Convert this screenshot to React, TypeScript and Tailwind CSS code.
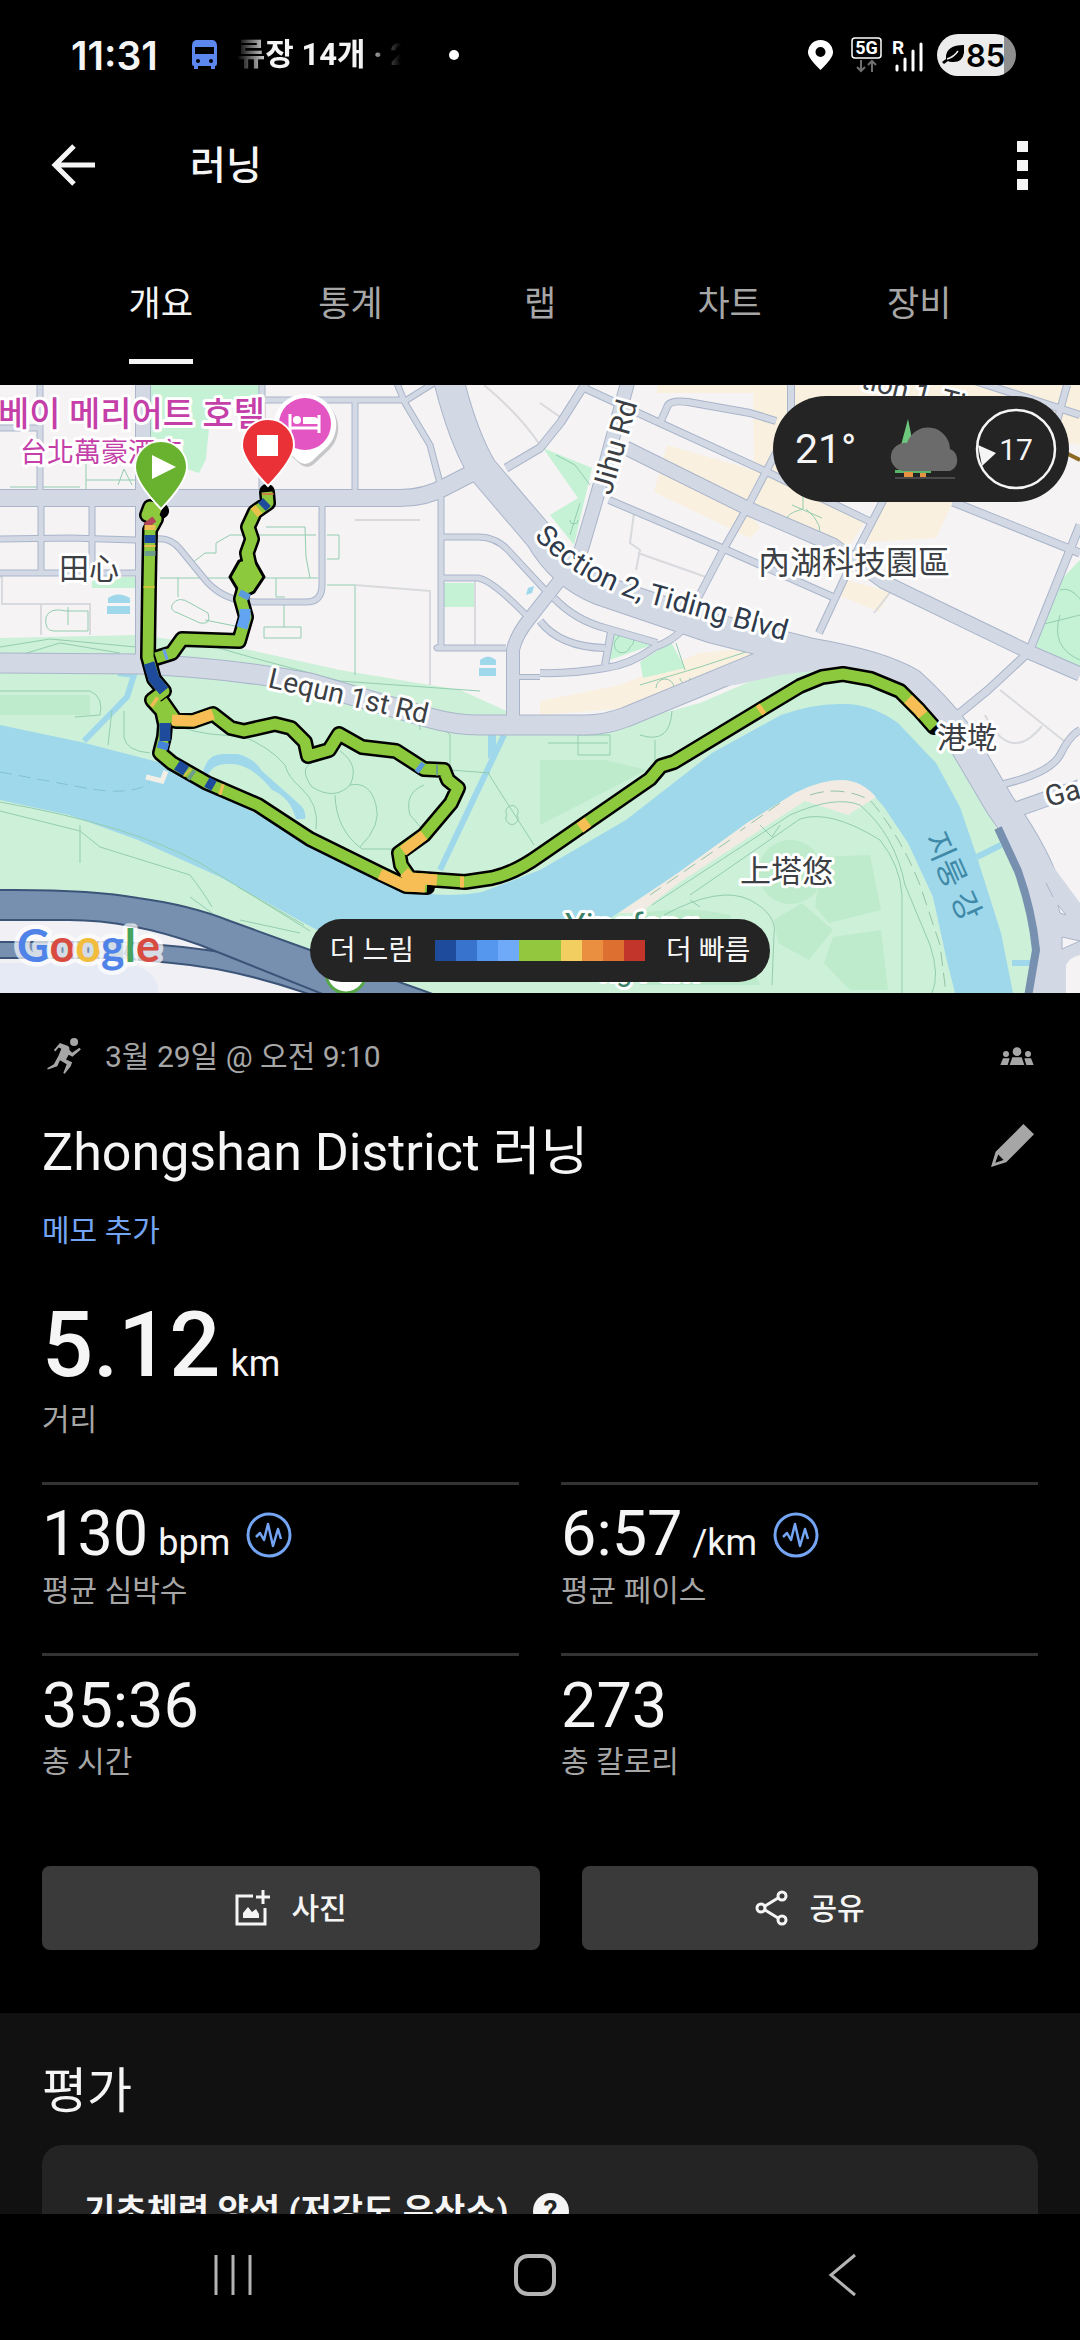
import type { ReactNode } from 'react';

const TABS = ['개요', '통계', '랩', '차트', '장비'];

const PACE_COLORS = [
  'bg-[#1e4b9b]',
  'bg-[#3873cd]',
  'bg-[#5596ee]',
  'bg-[#6eaaf8]',
  'bg-[#93c83e]',
  'bg-[#93c83e]',
  'bg-[#f2ce60]',
  'bg-[#e98f3f]',
  'bg-[#dd7030]',
  'bg-[#c1352b]',
];

// [path, width]
const ROADS: [string, number][] = [
  ['M40 0V108', 5],
  ['M41 118V188', 5],
  ['M92 118V188', 5],
  ['M0 43H40', 5],
  ['M0 154L70 153L136 155', 5],
  ['M0 188H136', 5],
  ['M156 154Q170 152 180 164L207 197Q226 217 255 217H306Q322 217 322 200V118', 5],
  ['M262 0V108', 5],
  ['M262 15H403', 5],
  ['M355 15V108', 5],
  ['M396 -4L405 18L430 60L441 102', 5],
  ['M405 16L434 -2', 5],
  ['M441 112V262L437 263H506', 5],
  ['M442 152H478Q496 152 508 165L545 205', 5],
  ['M442 193H478Q492 195 527 231', 5],
  ['M513 292H540', 4],
  ['M506 83L540 63L561 37L587 -4', 7],
  ['M582 2L660 38L767 87L871 137', 6],
  ['M660 38L668 20Q672 15 688 17L750 28L776 36', 6],
  ['M791 0V40', 6],
  ['M609 115L722 163L833 212', 6],
  ['M780 60L747 123L722 167L698 213Q690 250 655 262Q630 280 605 283Q570 289 540 288', 6],
  ['M886 110L860 160L819 248', 6],
  ['M953 117L1080 168', 7],
  ['M1080 140L1029 267L988 305L955 332', 7],
  ['M554 213Q575 235 605 243L657 258', 6],
  ['M540 236Q560 262 605 263', 6],
  ['M611 247L605 280', 6],
  ['M975 -4L1080 30', 6],
  ['M1067 0L1056 40', 6],
  ['M1004 399Q1050 388 1060 370Q1070 350 1080 345', 6],
  ['M1012 426L1080 402', 14],
  ['M626 63L747 123L833 160L884 197L1029 267L1080 289', 13],
  ['M628 -4L602 93Q592 130 572 195', 13],
  ['M513 340V265Q516 250 530 233L567 186', 12],
  ['M143 0V270', 14],
  ['M0 113H400Q425 113 445 102L480 84', 16],
  ['M0 278L140 279Q230 283 310 298L430 333Q455 340 480 340H585Q605 340 626 332L781 268', 19],
  ['M448 -8Q462 50 482 84L540 152Q562 190 600 205L712 243L810 268Q880 280 910 298Q935 320 960 352L1000 420Q1036 470 1048 510Q1060 550 1062 612', 29],
];

const TRAILS = [
  'M86 75V105M86 95H140M10 102H80M118 100L124 84L132 100M190 105H345',
  'M266 142H305L306 172L310 193M192 178L205 168H216V158L230 150L316 150M160 193H318M276 193V212H285M327 150H339V174H327M327 200H355V290',
  'M46 232Q50 222 66 226H88V246H54Q44 246 46 232M68 222V240M178 192V212M172 220Q178 210 190 218L208 228Q212 240 200 238L178 228Q170 226 172 220M205 235L240 242M284 220V242M264 242H301V253H264Z',
  'M0 262L50 254L136 262M20 270L60 258L120 268M215 262L250 272L340 296L480 306M0 306H90Q104 312 100 330L75 332M124 326V352Q126 366 150 368M112 325L108 360',
  'M180 342Q210 352 240 350Q270 362 285 380Q288 392 300 402Q320 420 316 444M340 366Q360 380 350 400Q335 416 312 402Q296 380 318 376M350 400Q370 396 376 420Q382 440 360 462M335 410Q336 445 362 464H400M424 400Q404 408 410 430L424 446',
  'M488 388L534 460M507 430A6 6 0 1 0 517 430A6 6 0 1 0 507 430M436 335L450 350V385L490 388M420 336V345',
  'M0 417Q130 440 200 478L310 546M0 426L80 446L100 462L190 490Q204 508 212 522M80 440V478M238 502L304 540M240 535L300 548M190 512L212 528',
  'M640 350Q670 360 672 326M655 378V355M548 358H608M578 350H610V370H578Z',
  'M652 520L790 430Q835 410 860 420Q895 450 905 500L930 560Q940 590 932 608M690 510L800 434Q830 424 880 455Q900 480 902 510V608M664 530Q720 500 750 515Q778 530 774 550L772 600M760 440L772 452L780 440M690 515L700 522',
  'M792 120L822 133M803 110V124Q780 130 790 140M806 124Q826 140 818 158M580 118L570 150M556 70L575 80L590 100M570 135A4 4 0 1 0 578 135',
  'M1060 205Q1075 200 1090 230M1040 240L1080 230M1060 230Q1050 262 1080 275',
  'M618 253A8 8 0 1 0 630 262A8 8 0 1 0 618 253M676 258L685 285M656 303A7 7 0 1 1 674 303M640 300L700 282L755 264M680 293A5 5 0 1 0 690 293',
];

const ROUTE_OUT =
  'M161 126L150 122L147 130L156 134L150 145L149 200L148 272L154 294L164 306L152 315L162 326L165 340L164 352L160 368L172 378L207 398L258 420L310 454L379 488L406 501L427 502';
const ROUTE_BACK =
  'M267 107L268 118L255 127L248 142L252 154L247 168L250 182L241 214L246 232L239 256L182 254L172 268L156 273M162 316L176 336L193 336L213 329L231 343L244 346L275 339L291 343L305 357L308 371L329 365L339 349L362 362L396 366L424 384L444 385L448 395L458 403L451 418L424 450L399 468L401 480L410 493L465 497L492 493Q515 488 540 470L650 394L661 381L674 377L760 325L800 301L822 292L843 289L871 294L900 306L919 325L934 342';

const SEGMENTS: [string, string][] = [
  ['M148 135L152 140', '#b3455a'],
  ['M150 140V145', '#eebb55'],
  ['M150 150V158', '#1e4b9b'],
  ['M150 160V162', '#eebb55'],
  ['M150 166V171', '#6d9d8e'],
  ['M149 201V203', '#d3c33c'],
  ['M164 270L167 269', '#6aa0e8'],
  ['M149 278L154 294L164 306', '#1e4b9b'],
  ['M165 338V356', '#1e4b9b'],
  ['M164 357L162 364', '#4684dc'],
  ['M153 316L156 318', '#eebb55'],
  ['M177 380L186 386', '#1e4b9b'],
  ['M187 387L188 388', '#eebb55'],
  ['M190 389L193 391', '#6d9d8e'],
  ['M207 397L214 401', '#1e4b9b'],
  ['M220 404L223 405', '#eebb55'],
  ['M172 335L193 336L213 329', '#f6be55'],
  ['M380 489L406 501L425 502', '#f6be55'],
  ['M268 108V110', '#cf7f43'],
  ['M267 117L262 122', '#1e4b9b'],
  ['M259 124L254 128', '#e8c14b'],
  ['M246 207L243 213', '#5b9bdc'],
  ['M245 224V232L242 243', '#62a3f2'],
  ['M418 381L422 384', '#5b9bdc'],
  ['M436 385L438 385', '#6d9d8e'],
  ['M424 450L403 466', '#f6be55'],
  ['M404 487L410 493L437 495', '#f6be55'],
  ['M460 497H464', '#f6be55'],
  ['M580 443L588 437', '#f6be55'],
  ['M759 326L763 323', '#f6be55'],
  ['M908 314L919 325L923 330', '#f6be55'],
];

interface MapLabelProps {
  x: number;
  y: number;
  size: number;
  color?: string;
  rotate?: number;
  weight?: number;
  children: ReactNode;
}

function MapLabel({ x, y, size, color = '#3c3f44', rotate = 0, weight = 400, children }: MapLabelProps) {
  return (
    <text
      x={x}
      y={y}
      fontSize={size}
      fontWeight={weight}
      fill={color}
      stroke="#ffffff"
      strokeWidth={6}
      strokeLinejoin="round"
      paintOrder="stroke"
      transform={`rotate(${rotate} ${x} ${y})`}
    >
      {children}
    </text>
  );
}

function RouteMap() {
  return (
    <svg viewBox="0 0 1080 608" className="block w-full" role="img" aria-label="Zhongshan District">
      <rect width="1080" height="608" fill="#f5f3f4" />

      {/* built-up blocks */}
      <g fill="#f9f0df">
        <path d="M753 0H1080V60L960 40L776 112L754 84ZM657 0H753V8H657Z" />
        <path d="M667 60L760 87L747 123L760 143L750 153L654 107Z" />
        <path d="M767 86L867 133L850 160H829L753 125Z" />
        <path d="M884 117H953L936 153L867 157Z" />
        <path d="M846 195L891 207L879 227L838 210Z" />
        <path d="M620 300L700 268L765 262L765 275L640 322L540 330V316Z" />
      </g>

      {/* parks */}
      <g fill="#c5f2d5">
        <path d="M151 0H259V18L211 22L206 74L199 88L190 85L151 62Z" />
        <path d="M92 192H136V203H92ZM442 198H474V222H442Z" />
        <path d="M543 63L592 83L574 160L550 130L578 113Z" />
        <path d="M1080 175L1056 200L1036 263L1080 285Z" />
        <path d="M611 247L652 260L607 276ZM640 277L671 257L685 283L643 293Z" />
      </g>
      <path
        d="M0 253L138 250L250 265L340 285L460 305L520 332L600 345L700 318L770 288L820 282L880 295L930 335L975 400L1035 520L1040 608H0Z"
        fill="#cdf0d8"
      />
      <path d="M540 375H605L647 385L540 440ZM0 310H90V330H0ZM790 455A32 32 0 1 0 791 455ZM822 472L870 470L881 525L829 538L815 522ZM774 535L802 518L833 545L809 575L778 558ZM833 552L881 545L888 605H850L824 578ZM640 528Q690 520 730 530L760 600H640Z" fill="#beebcc" />

      {/* water */}
      <g fill="#a0d8eb">
        <path d="M0 340L81 357L158 377L207 402L310 458L396 502Q440 515 482 507L540 485L626 435L712 368L781 330Q815 318 843 319Q870 318 898 338L936 378L960 422L977 472L1001 548L1013 608H955L946 572L933 512L908 458L884 422Q865 398 843 395Q820 395 795 408L747 438L678 488L600 540H560L500 585H400L317 545L275 522L220 492L138 455L69 430L0 415Z" />
        <path d="M108 213Q118 206 130 213V218H108ZM107 221H130V229H107ZM480 275Q488 268 496 275V280H480ZM479 283H496V291H479ZM488 350H496V366L488 374ZM528 203L534 201L532 208L526 210Z" />
        <path d="M203 388Q206 370 222 369H238Q255 374 262 386L298 418Q307 425 305 434H296Q290 412 272 405Q250 378 230 379Q212 378 207 392Z" />
      </g>
      <path d="M118 288L134 290L127 312L84 356M504 350L440 485M977 472L1001 460M1012 578H1080" stroke="#a0d8eb" strokeWidth="6" fill="none" />
      <path d="M843 395Q862 396 876 412L848 430L805 416L680 497L640 528L619 528L678 488L747 438L795 408Q820 395 843 395Z" fill="#f1ebe3" />
      <path d="M0 387L80 402Q130 412 150 398" stroke="#82bfd6" strokeWidth="1" strokeDasharray="12 7" fill="none" />
      <path d="M146 392L162 396L166 386" stroke="#f1efe6" strokeWidth="5" fill="none" />
      <path d="M810 410Q840 400 870 415Q900 450 920 500L940 560L946 608M780 418L740 446M730 455L650 510" stroke="#93c3a8" strokeWidth="1" strokeDasharray="14 7" fill="none" />

      <g fill="none" stroke="#93cdb0" strokeWidth="1">
        {TRAILS.map(d => (
          <path key={d} d={d} />
        ))}
      </g>
      <g fill="none" stroke="#d9dadd" strokeWidth="2">
        <path d="M0 192H2V219H90V250M41 219V250M355 135H420M355 200L430 206V300M475 190V262M484 0Q520 30 540 60M634 128L630 158L640 165L636 185M638 168L706 192M874 228L892 205M1000 305L1064 356M985 330Q1010 380 1042 341M540 18L566 36" />
      </g>

      {/* expressway */}
      <path d="M0 533H80L180 550L320 608H0Z" fill="#f1f1f5" />
      <path d="M0 578H120Q160 582 158 608H0Z" fill="#e6eaf4" />
      <g fill="#7890b0" stroke="#3b5478" strokeWidth="2">
        <path d="M-4 557H120Q180 560 240 570L300 590L360 612H317Q240 584 172 578L120 573H-4Z" />
        <path d="M-4 505Q90 504 138 513Q190 520 230 536L310 565L441 612H330Q250 580 200 560Q130 535 69 535H-4Z" />
      </g>

      <g fill="none" strokeLinejoin="round">
        {ROADS.map(([d, w]) => (
          <path key={d} d={d} stroke="#aab5ca" strokeWidth={w + 2} />
        ))}
        {ROADS.map(([d, w]) => (
          <path key={d} d={d} stroke="#d2d9e5" strokeWidth={w} />
        ))}
      </g>
      <path d="M765 264L800 268L860 280L780 290L735 300L690 304L764 274Z" fill="#d2d9e5" />
      <path d="M1000 440L1022 435L1052 480L1080 518V608H1032L1036 560L1020 490Z" fill="#d2d9e5" />
      <path d="M998 443L1018 486Q1032 525 1036 565L1028 612" stroke="#7890b0" strokeWidth="8" fill="none" />
      <path d="M1046 498L1053 512M1058 520L1066 530L1060 528ZM1062 552L1080 556L1062 564Z" stroke="#aab5ca" fill="#f5f3f4" />
      <path d="M1066 580Q1070 572 1080 570V608H1066Z" fill="#f5f3f4" />
      <path d="M1066 68L1080 75" stroke="#8c6a24" strokeWidth="4" />

      {/* hotel marker */}
      <path d="M305 9A31 31 0 0 1 328 61L312 76Q305 82 298 76L282 61A31 31 0 0 1 305 9Z" fill="#9a9ca0" opacity="0.5" transform="translate(2 3)" />
      <path d="M305 9A31 31 0 0 1 328 61L312 76Q305 82 298 76L282 61A31 31 0 0 1 305 9Z" fill="#ffffff" />
      <circle cx="305" cy="39" r="26" fill="#e455c4" />
      <path d="M290 29V48M290 43H319M319 30V48" stroke="#ffffff" strokeWidth="3" />
      <path d="M303 32H314Q319 32 319 39H303Z" fill="#ffffff" />
      <circle cx="297" cy="35" r="4" fill="#ffffff" />

      <g fontFamily='Roboto, "Noto Sans CJK KR", sans-serif'>
        <MapLabel x={-2} y={41} size={34} color="#c43fa8" weight={500}>베이 메리어트 호텔</MapLabel>
        <MapLabel x={1048} y={422} size={29} rotate={-15}>Gan</MapLabel>
        <MapLabel x={267} y={302} size={28} rotate={13}>Lequn 1st Rd</MapLabel>
        <MapLabel x={611} y={111} size={29} rotate={-74}>Jihu Rd</MapLabel>
        <MapLabel x={860} y={3} size={28} rotate={14}>tion 1, Ti</MapLabel>
        <path id="tiding" d="M534 152Q574 196 640 216Q700 232 800 260" fill="none" />
        <text fontSize="29" fill="#2f3b4c" stroke="#ffffff" strokeWidth="6" strokeLinejoin="round" paintOrder="stroke">
          <textPath href="#tiding">Section 2, Tiding Blvd</textPath>
        </text>
        <text x="924" y="453" fontSize="31" fill="#3f8aa8" transform="rotate(66 924 453)">지룽 강</text>
        <MapLabel x={565} y={552} size={34} color="#3b8168">Yingfeng</MapLabel>
        <MapLabel x={600} y={596} size={29} color="#3b8168">ng Park</MapLabel>
      </g>
      <g fontFamily='"Noto Sans CJK TC", sans-serif'>
        <MapLabel x={20} y={77} size={27} color="#c43fa8">台北萬豪酒店</MapLabel>
        <MapLabel x={59} y={194} size={30}>田心</MapLabel>
        <MapLabel x={758} y={189} size={32}>內湖科技園區</MapLabel>
        <MapLabel x={740} y={497} size={31}>上塔悠</MapLabel>
      </g>

      {/* park marker behind the legend */}
      <circle cx="346" cy="588" r="20" fill="#ffffff" stroke="#57a64a" strokeWidth="3" />

      {/* track */}
      <g fill="none" strokeLinejoin="round">
        <path d={ROUTE_OUT} stroke="#000000" strokeWidth="16" strokeLinecap="round" />
        <path d={ROUTE_BACK} stroke="#000000" strokeWidth="16" strokeLinecap="round" />
        <path d="M239 176Q248 172 255 176L264 192L254 207Q247 212 239 207L230 192Z" fill="#8dc93d" stroke="#000000" strokeWidth="3" />
        <path d={ROUTE_OUT} stroke="#8dc93d" strokeWidth="11" />
        <path d={ROUTE_BACK} stroke="#8dc93d" strokeWidth="11" />
        {SEGMENTS.map(([d, color]) => (
          <path key={d} d={d} stroke={color} strokeWidth="11" />
        ))}
      </g>
      <g fontFamily='"Noto Sans CJK TC", sans-serif'>
        <MapLabel x={937} y={363} size={30}>港墘</MapLabel>
      </g>

      {/* finish and start pins */}
      <path d="M268 101Q242 74 242 60A26 26 0 0 1 294 60Q294 74 268 101Z" fill="#e93137" stroke="#ffffff" strokeWidth="2" />
      <rect x="257" y="50" width="21" height="21" fill="#ffffff" />
      <path d="M161 124Q135 97 135 82A26 26 0 0 1 187 82Q187 97 161 124Z" fill="#68b22f" stroke="#ffffff" strokeWidth="2" />
      <path d="M152 70V94L176 82Z" fill="#ffffff" />

      <text x="17" y="577" fontSize="45" fontFamily="Lato, sans-serif" fontWeight="700" stroke="#ffffff" strokeOpacity="0.7" strokeWidth="9" strokeLinejoin="round" paintOrder="stroke">
        <tspan fill="#4f83e8">G</tspan>
        <tspan fill="#d84b40">o</tspan>
        <tspan fill="#f2bd3c">o</tspan>
        <tspan fill="#4f83e8">g</tspan>
        <tspan fill="#45a35b">l</tspan>
        <tspan fill="#d84b40">e</tspan>
      </text>
    </svg>
  );
}

function StatusBar() {
  return (
    <div className="flex h-[110px] shrink-0 items-center justify-between pr-16 pl-[71px]">
      <div className="flex items-center">
        <span className="font-[Inter] text-[39px] leading-none font-semibold">11:31</span>
        <svg viewBox="0 0 25 30" className="ml-[34px] h-[30px] w-[25px]" fill="#5b87ee">
          <path
            fillRule="evenodd"
            d="M4 0H21Q25 1 25 6V24Q25 26 23 26V29H19V26H6V29H2V26Q0 26 0 24V6Q0 1 4 0ZM3 7V14H22V7ZM6 19A2 2 0 1 0 6 23A2 2 0 1 0 6 19ZM19 19A2 2 0 1 0 19 23A2 2 0 1 0 19 19Z"
          />
        </svg>
        <span className="ml-5 w-[164px] overflow-hidden [mask-image:linear-gradient(to_right,transparent,black_20%,black_75%,transparent)] text-[31px] leading-10 font-bold whitespace-nowrap">
          류장 14개 · 2
        </span>
        <span className="ml-12 size-[10px] rounded-full bg-white" />
      </div>
      <div className="flex items-center">
        <svg viewBox="0 0 25 30" className="h-[30px] w-[25px]" fill="#ffffff">
          <path fillRule="evenodd" d="M12.500 0A12.500 12 0 0 1 25 12.500Q25 18 12.500 30Q0 18 0 12.500A12.500 12 0 0 1 12.500 0ZM12.500 7A5 5 0 1 0 12.500 17A5 5 0 1 0 12.500 7Z" />
        </svg>
        <svg viewBox="0 0 72 36" className="ml-[18px] h-9 w-[72px]" fill="none">
          <rect x="1" y="1" width="29" height="20" rx="3" stroke="#ffffff" strokeWidth="1.500" />
          <text x="15.500" y="17" fontSize="18" fontFamily="Roboto, sans-serif" fontWeight="700" fill="#ffffff" textAnchor="middle">
            5G
          </text>
          <path d="M10 23V34M6 30L10 34L14 30M21 35V24M17 28L21 24L25 28" stroke="#6f6f6f" strokeWidth="2" />
          <text x="41" y="17" fontSize="19" fontFamily="Roboto, sans-serif" fontWeight="700" fill="#ffffff">
            R
          </text>
          <path d="M46 29V33M54 22V33M62 14V33M70 7V33" stroke="#ffffff" strokeWidth="3" strokeLinecap="round" />
        </svg>
        <div className="ml-[14px] flex h-[42px] w-[79px] items-center rounded-full bg-linear-to-r from-[#ececec] from-85% to-[#8f8f8f] to-85% pl-[5px] text-black">
          <svg viewBox="0 0 22 20" className="h-5 w-[22px]">
            <path d="M22 0Q24 18 10 17Q7 17 6 16L2 19L0 17L4 14Q3 0 22 0Z" />
            <path d="M5 14Q12 12 16 6" stroke="#ececec" strokeWidth="1.500" fill="none" />
          </svg>
          <span className="ml-0.5 font-[Inter] text-[31px] leading-none font-semibold">85</span>
        </div>
      </div>
    </div>
  );
}

function PulseIcon() {
  return (
    <svg viewBox="0 0 46 46" className="ml-4 size-[46px]" fill="none" stroke="#74a5f4" strokeWidth="3">
      <circle cx="23" cy="23" r="21" />
      <path d="M10 25L14 21L18 28L22 12L27 34L32 17L35 27" strokeWidth="2.500" strokeLinejoin="round" />
    </svg>
  );
}

interface StatProps {
  value: string;
  unit?: string;
  label: string;
  pulse?: boolean;
}

function Stat({ value, unit, label, pulse = false }: StatProps) {
  return (
    <div className="h-[171px] border-t-3 border-[#333333] pt-4">
      <div className="flex h-[68px] items-center">
        <span className="flex items-baseline">
          <span className="text-[63px] leading-[68px]">{value}</span>
          {unit && <span className="ml-2.5 text-[36px]">{unit}</span>}
        </span>
        {pulse && <PulseIcon />}
      </div>
      <div className="mt-0.5 text-[30px] leading-10 text-[#a6a6a6]">{label}</div>
    </div>
  );
}

export default function App() {
  return (
    <div className="flex h-screen flex-col bg-black font-[Roboto,'Noto_Sans_CJK_KR',sans-serif] text-[#f5f5f5]">
      <StatusBar />

      <header className="flex h-[110px] shrink-0 items-center px-[50px]">
        <button aria-label="뒤로">
          <svg viewBox="0 0 46 42" className="h-[42px] w-[46px]" fill="none" stroke="#f5f5f5" strokeWidth="5">
            <path d="M24 2L5 21L24 40M5 21H45" />
          </svg>
        </button>
        <h1 className="ml-[94px] flex-1 pt-0.5 text-[39px] leading-none font-medium">러닝</h1>
        <button aria-label="더보기" className="flex flex-col gap-2 px-[2px]">
          <span className="size-[11px] bg-[#f5f5f5]" />
          <span className="size-[11px] bg-[#f5f5f5]" />
          <span className="size-[11px] bg-[#f5f5f5]" />
        </button>
      </header>

      <nav className="flex h-[165px] shrink-0 px-[66px]">
        {TABS.map((tab, i) => (
          <button key={tab} className="flex flex-1 flex-col items-center pt-[59px]">
            <span className={i === 0 ? 'text-[35px] leading-[52px]' : 'text-[35px] leading-[52px] text-[#a6a6a6]'}>
              {tab}
            </span>
            {i === 0 && <span className="mt-7 h-[5px] w-16 bg-[#f5f5f5]" />}
          </button>
        ))}
      </nav>

      <main className="min-h-0 flex-1 overflow-hidden">
        <section className="relative">
          <RouteMap />
          <div className="absolute top-[11px] right-[11px] flex h-[106px] items-center rounded-full bg-[#242424] pr-3 pl-[22px]">
            <span className="w-[68px] text-[41px] leading-none">21°</span>
            <svg viewBox="0 0 76 64" className="ml-6 h-16 w-[76px]">
              <path d="M21 2L27 32H13Z" fill="#6cc77c" />
              <path d="M8 53H44V56H8Z" fill="#58b868" />
              <path d="M17 55H26V60H17ZM33 56H39V60H33Z" fill="#e8933f" />
              <path d="M8 61H68" stroke="#4a4a4a" strokeWidth="2" />
              <path d="M16 54A14 14 0 1 1 20 26A22 22 0 0 1 63 32A12 12 0 0 1 63 54Z" fill="#6b6b6b" />
            </svg>
            <svg viewBox="0 0 82 82" className="ml-3 size-[82px]">
              <circle cx="41" cy="41" r="39" fill="none" stroke="#f5f5f5" strokeWidth="2.500" />
              <path d="M3 37L21 45L7 58Z" fill="#f5f5f5" />
              <text x="41" y="52" textAnchor="middle" fontSize="30" fill="#f5f5f5">17</text>
            </svg>
          </div>
          <div className="absolute inset-x-0 bottom-[11px] flex justify-center">
            <div className="flex h-[63px] items-center gap-[21px] rounded-full bg-[#242424] px-5 text-[28px]">
              <span>더 느림</span>
              <span className="flex h-[21px]">
                {PACE_COLORS.map((color, i) => (
                  <span key={i} className={`w-[21px] ${color}`} />
                ))}
              </span>
              <span>더 빠름</span>
            </div>
          </div>
        </section>

        <section className="px-[42px] pt-[31px]">
          <div className="flex h-16 items-center text-[30px] text-[#a6a6a6]">
            <svg viewBox="0 0 100 110" className="ml-[5px] h-[37px] w-[34px]" fill="#a6a6a6">
              <circle cx="80" cy="12" r="12" />
              <path d="M38 15L62 24Q68 28 66 36L74 44L96 29L100 34L75 56L64 50L56 64L74 72L70 84L52 106L48 104L58 78L38 66L30 84L2 94L0 90L20 78L34 52L42 32L34 28L24 40L20 36Z" />
            </svg>
            <span className="ml-6 flex-1">3월 29일 @ 오전 9:10</span>
            <svg viewBox="0 0 100 54" className="mr-1 h-[18px] w-[34px]" fill="#a6a6a6">
              <circle cx="50" cy="14" r="13" />
              <circle cx="17" cy="21" r="9" />
              <circle cx="83" cy="21" r="9" />
              <path d="M36 31H64L72 54H28ZM8 34H28L22 54H0ZM72 34H92L100 54H78Z" />
            </svg>
          </div>

          <div className="mt-[22px] flex h-[86px] items-center justify-between">
            <h2 className="text-[52px] leading-none">Zhongshan District 러닝</h2>
            <button aria-label="수정" className="mr-1 pb-4">
              <svg viewBox="0 0 130 130" className="size-[43px]" fill="#a6a6a6">
                <path fillRule="evenodd" d="M98 0L130 31L46 116L0 130L14 84ZM22 92L13 117L38 109Z" />
              </svg>
            </button>
          </div>
          <a href="#memo" className="mt-3 block text-[30px] leading-[46px] text-[#74a5f4]">
            메모 추가
          </a>

          <div className="mt-[42px] flex h-[100px] items-baseline">
            <span className="text-[90px] leading-[100px] font-medium">5.12</span>
            <span className="ml-2.5 text-[36px]">km</span>
          </div>
          <div className="mt-1 text-[30px] leading-10 text-[#a6a6a6]">거리</div>

          <div className="mt-[42px] grid grid-cols-2 gap-x-[42px]">
            <Stat value="130" unit="bpm" label="평균 심박수" pulse />
            <Stat value="6:57" unit="/km" label="평균 페이스" pulse />
            <Stat value="35:36" label="총 시간" />
            <Stat value="273" label="총 칼로리" />
          </div>

          <div className="mt-[42px] grid grid-cols-[498fr_456fr] gap-[42px] text-[30px] font-medium">
            <button className="flex h-[84px] items-center justify-center gap-5 rounded-lg bg-[#3a3a3a]">
              <svg viewBox="0 0 36 36" className="size-9" fill="none" stroke="#f5f5f5" strokeWidth="3">
                <path d="M18 6H2V34H30V18M28 0V14M21 7H35" />
                <path d="M8 28V23L13 17L17 22L21 19L24 24V28Z" fill="#f5f5f5" stroke="none" />
              </svg>
              사진
            </button>
            <button className="flex h-[84px] items-center justify-center gap-5 rounded-lg bg-[#3a3a3a]">
              <svg viewBox="0 0 34 36" className="h-9 w-[34px]" fill="none" stroke="#f5f5f5" strokeWidth="3">
                <circle cx="27" cy="6" r="4" />
                <circle cx="6" cy="18" r="4" />
                <circle cx="27" cy="30" r="4" />
                <path d="M10 16L23 8M10 20L23 28" />
              </svg>
              공유
            </button>
          </div>
        </section>

        <section className="mt-[63px] bg-[#111111] px-[42px] pt-11">
          <h2 className="text-[49px] leading-[70px]">평가</h2>
          <div className="mt-[18px] h-[200px] rounded-t-[20px] bg-[#242424] px-[42px] pt-[42px]">
            <div className="flex items-center gap-6">
              <h3 className="text-[34px] leading-[48px] font-bold">기초체력 양성 (저강도 유산소)</h3>
              <button aria-label="도움말" className="size-9 rounded-full bg-[#f5f5f5] text-[28px] leading-9 font-bold text-[#242424]">
                ?
              </button>
            </div>
          </div>
        </section>
      </main>

      <nav className="flex h-[126px] shrink-0 justify-between bg-black px-[208px] pb-1">
        <button aria-label="최근 앱" className="w-[50px]">
          <svg viewBox="0 0 50 44" className="h-11 w-[50px]" stroke="#b4b4b4" strokeWidth="3">
            <path d="M8 2V42M25 2V42M42 2V42" />
          </svg>
        </button>
        <button aria-label="홈">
          <svg viewBox="0 0 44 44" className="size-11" fill="none" stroke="#b4b4b4" strokeWidth="4">
            <rect x="3" y="3" width="38" height="38" rx="12" />
          </svg>
        </button>
        <button aria-label="이전" className="w-[60px]">
          <svg viewBox="0 0 30 44" className="mx-auto h-11 w-[30px]" fill="none" stroke="#b4b4b4" strokeWidth="3">
            <path d="M28 2L4 22L28 42" />
          </svg>
        </button>
      </nav>
    </div>
  );
}
